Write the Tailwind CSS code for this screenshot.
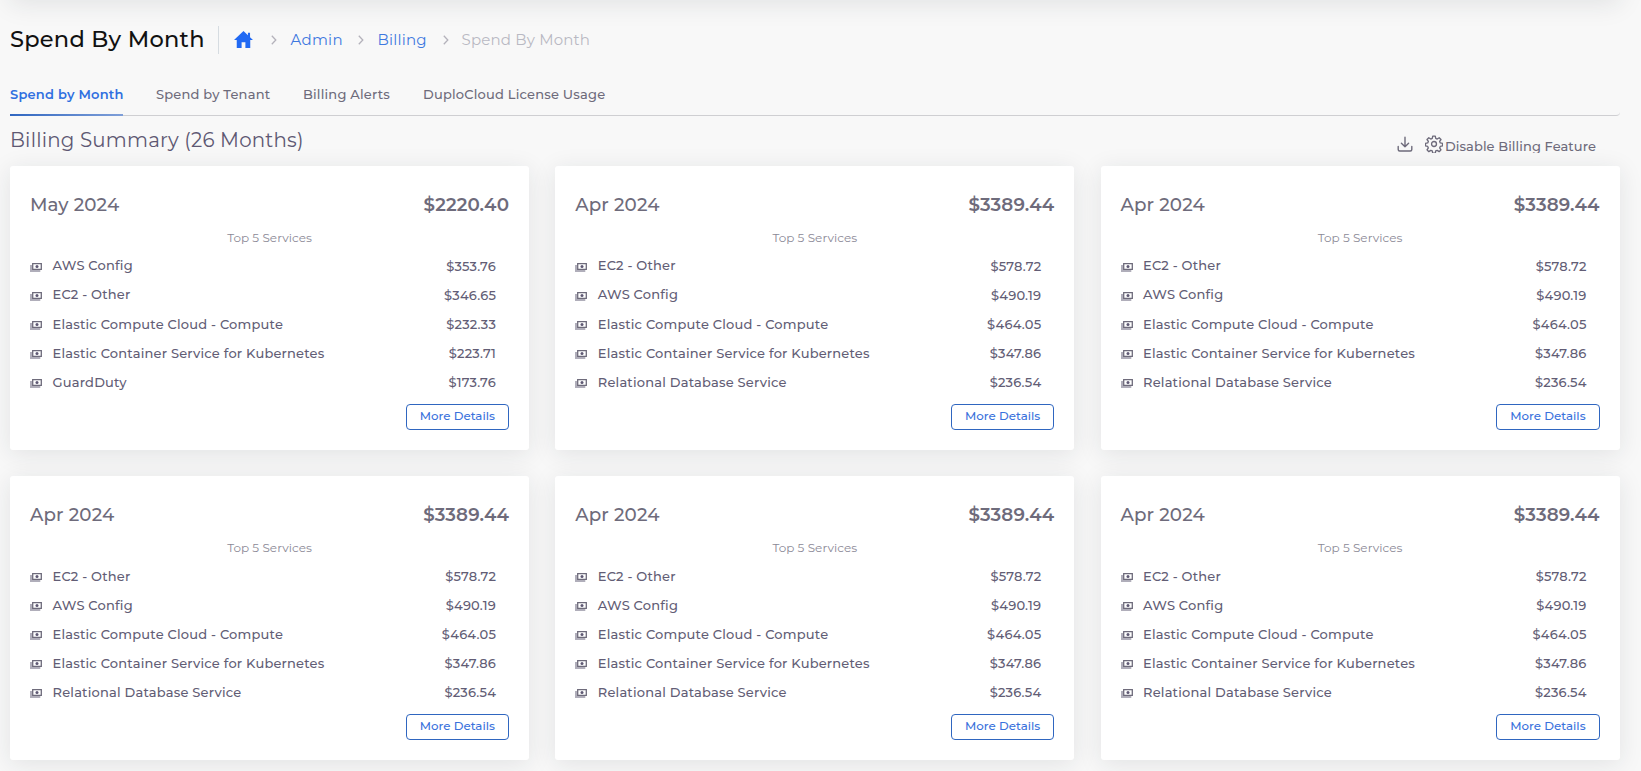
<!DOCTYPE html>
<html lang="en">
<head>
<meta charset="utf-8">
<title>Spend By Month</title>
<script src="https://cdn.jsdelivr.net/npm/@tailwindcss/browser@4"></script>
</head>
<body class="flex h-[771px] flex-col overflow-hidden bg-[#f8f8f8] font-[Montserrat,Inter,sans-serif] text-[13px] text-[#6e6b7b]">
<div class="-mt-20 ml-[10px] h-20 w-[1610px] shrink-0 shadow-[0_4px_24px_0_rgba(34,41,47,0.1)]"></div>
<main class="ml-[10px] w-[1610px]">
  <header class="flex h-[79px] items-center whitespace-nowrap">
    <h1 class="w-[208px] text-[22.5px] font-medium tracking-[0.25px] text-[#111]">Spend By Month</h1>
    <div class="h-7 w-px bg-[#d6dce1]"></div>
    <nav class="flex items-center text-[15px] text-[#3f78e0]">
      <svg class="ml-[15px] h-[17px] w-[19px] -mt-px" viewBox="0 0 18 16" fill="#2169f3"><path d="M9 0 0 8.400h2.600V16h4.600v-5.400h3.600V16h4.600V8.400H18L15.200 5.800V1.600h-2v2.300z"/></svg>
      <svg class="ml-[18px] h-[10px] w-[6px]" viewBox="0 0 6 10" fill="none" stroke="#b4b2bb" stroke-width="1.3"><path d="m.8.8 4 4.2-4 4.2"/></svg>
      <a class="ml-[13.5px] w-[67.5px] pt-px tracking-[0.28px]">Admin</a>
      <svg class="h-[10px] w-[6px]" viewBox="0 0 6 10" fill="none" stroke="#b4b2bb" stroke-width="1.3"><path d="m.8.8 4 4.2-4 4.2"/></svg>
      <a class="ml-[13.5px] w-[65px] pt-px tracking-[0.2px]">Billing</a>
      <svg class="h-[10px] w-[6px]" viewBox="0 0 6 10" fill="none" stroke="#b4b2bb" stroke-width="1.3"><path d="m.8.8 4 4.2-4 4.2"/></svg>
      <span class="ml-[13px] pt-px tracking-[0.18px] text-[#b9b9c3]">Spend By Month</span>
    </nav>
  </header>
  <nav class="flex h-[37px] gap-[33px] rounded-br border-b border-[#cfcfd2] font-medium tracking-[0.2px] whitespace-nowrap">
    <a class="relative w-[113px] pt-[6px] font-semibold tracking-[0.22px] text-[#2f6fe0]">Spend by Month<span class="absolute -bottom-px left-0 h-0.5 w-[113px] bg-linear-to-r from-[#2f66c0] to-[#7f9fd8]"></span></a>
    <a class="w-[114px] pt-[6px]">Spend by Tenant</a>
    <a class="w-[87px] pt-[6px]">Billing Alerts</a>
    <a class="pt-[6px]">DuploCloud License Usage</a>
  </nav>
  <section class="flex h-[50px] justify-between whitespace-nowrap">
    <h2 class="pt-[9px] text-[19.8px] leading-[30px] tracking-[0.2px] text-[#5e5873]">Billing Summary (26 Months)</h2>
    <div class="flex items-start pr-[24px]">
      <svg class="mt-[20px] h-4 w-4" viewBox="0 0 16 16" fill="none" stroke="#6e6b7b" stroke-width="1.4" stroke-linecap="round" stroke-linejoin="round"><path d="M1.2 10.5v3a1.5 1.5 0 0 0 1.5 1.5h10.6a1.5 1.5 0 0 0 1.5-1.5v-3M8 1.2v9.5M4.4 7.2 8 10.8l3.6-3.6"/></svg>
      <svg class="mt-[19px] ml-[12px] h-[18px] w-[18px]" viewBox="0 0 24 24" fill="none" stroke="#6e6b7b" stroke-width="1.8" stroke-linejoin="round"><circle cx="12" cy="12" r="3.3"/><path d="M10.3 1.5h3.4l.6 3 2 .85 2.6-1.75 2.4 2.4-1.75 2.6.85 2 3 .6v3.4l-3 .6-.85 2 1.75 2.6-2.4 2.4-2.6-1.75-2 .85-.6 3h-3.4l-.6-3-2-.85-2.6 1.75-2.4-2.4 1.75-2.6-.85-2-3-.6v-3.4l3-.6.85-2-1.75-2.6 2.4-2.4 2.6 1.75 2-.85z"/></svg>
      <span class="mt-[20px] ml-[2.5px] h-[17px] overflow-hidden leading-[21px] font-medium tracking-[0.08px]">Disable Billing Feature</span>
    </div>
  </section>
  <section id="cards" class="grid w-[1609.6px] grid-cols-3 gap-x-[26.2px] gap-y-[26px]"></section>
</main>
<script>
const may = { month: 'May 2024', total: '$2220.40', rows: [['AWS Config', '$353.76'], ['EC2 - Other', '$346.65'], ['Elastic Compute Cloud - Compute', '$232.33'], ['Elastic Container Service for Kubernetes', '$223.71'], ['GuardDuty', '$173.76']] };
const apr = { month: 'Apr 2024', total: '$3389.44', rows: [['EC2 - Other', '$578.72'], ['AWS Config', '$490.19'], ['Elastic Compute Cloud - Compute', '$464.05'], ['Elastic Container Service for Kubernetes', '$347.86'], ['Relational Database Service', '$236.54']] };
const icon = `<svg class="mt-[1.5px] mr-[10.5px] h-[9px] w-3 shrink-0" viewBox="0 0 12 9"><path d="M0 2h2v5h8.300v2H0z" fill="#b0aeba"/><path d="M2.700.7h8.600v5.600H2.700z" fill="#fff" stroke="#6e6b7b" stroke-width="1.300"/><circle cx="7" cy="3.500" r="1.500" fill="#5e5873"/></svg>`;
document.getElementById('cards').innerHTML = [may, apr, apr, apr, apr, apr].map((c, i) => `
  <article class="flex h-[284px] flex-col rounded-[3px] bg-white px-5 pt-[27px] whitespace-nowrap shadow-[0_4px_24px_0_rgba(34,41,47,0.1)]">
    <div class="flex h-6 items-center justify-between text-[18.3px] tracking-[0.12px]">
      <h3 class="font-medium">${c.month}</h3>
      <strong class="font-semibold">${c.total}</strong>
    </div>
    <p class="mt-[12.5px] h-4 text-center text-[12px] leading-4 tracking-[0.05px] text-[#8b8996]">Top 5 Services</p>
    <ul class="mt-[6.7px] pr-[13px] font-medium tracking-[0.2px] text-[#625d75]">${c.rows.map(([n, v], r) => `
      <li class="flex h-[29.1px] items-center">${icon}<span class="grow ${i < 3 && r < 2 ? 'pb-0.5' : ''}">${n}</span><span>${v}</span></li>`).join('')}
    </ul>
    <button class="mt-[6px] h-[26px] w-[103.4px] self-end rounded-[4px] border border-[#2f66c0] pb-0.5 text-[11.8px] leading-[22px] font-medium tracking-[0.03px] text-[#3a72dc]">More Details</button>
  </article>`).join('');
</script>
</body>
</html>
